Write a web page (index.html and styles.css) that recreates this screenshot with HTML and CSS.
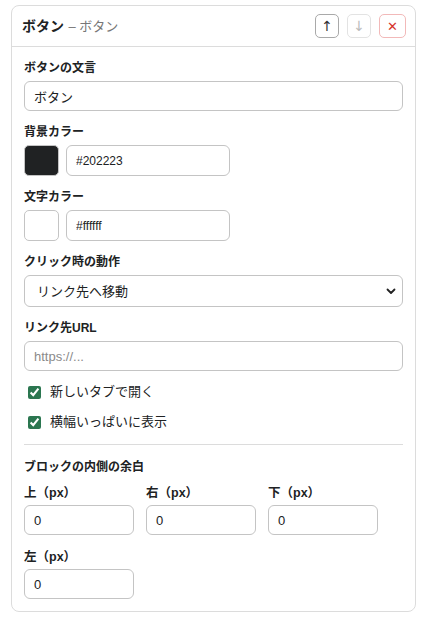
FILE: index.html
```html
<!DOCTYPE html>
<html lang="ja">
<head>
  <meta charset="UTF-8" />
  <meta name="viewport" content="width=device-width, initial-scale=1.0"/>
  <title>ボタン</title>
  <link rel="stylesheet" href="styles.css">
</head>
<body>
  <div class="block-card">
    <div class="block-head">
      <div class="block-title"><strong>ボタン</strong> <span class="block-sub">– ボタン</span></div>
      <div class="head-actions">
        <button class="icon-btn" title="上へ">↑</button>
        <button class="icon-btn disabled" title="下へ">↓</button>
        <button class="icon-btn danger" title="削除">✕</button>
      </div>
    </div>

    <div class="block-body">
      <div class="field">
        <label>ボタンの文言</label>
        <input type="text" class="text-input" value="ボタン">
      </div>

      <div class="field">
        <label>背景カラー</label>
        <div class="color-row">
          <span class="swatch" style="background: #202223;"></span>
          <input type="text" class="text-input hex" value="#202223">
        </div>
      </div>

      <div class="field">
        <label>文字カラー</label>
        <div class="color-row">
          <span class="swatch" style="background: #ffffff;"></span>
          <input type="text" class="text-input hex" value="#ffffff">
        </div>
      </div>

      <div class="field">
        <label>クリック時の動作</label>
        <div class="select-wrap">
          <select class="select-input">
            <option>リンク先へ移動</option>
          </select>
          <svg class="chevron" width="10" height="7" viewBox="0 0 10 7">
            <path d="M1.5 1.5 L5 5 L8.5 1.5" fill="none" stroke="#222" stroke-width="1.8" stroke-linecap="round" stroke-linejoin="round"/>
          </svg>
        </div>
      </div>

      <div class="field">
        <label>リンク先URL</label>
        <input type="text" class="text-input" placeholder="https://...">
      </div>

      <div class="checks">
        <label class="check"><input type="checkbox" checked> 新しいタブで開く</label>
        <label class="check"><input type="checkbox" checked> 横幅いっぱいに表示</label>
      </div>

      <hr class="divider">

      <div class="field">
        <label>ブロックの内側の余白</label>
        <div class="pad-grid">
          <div class="pad-item">
            <label>上（px）</label>
            <input type="text" class="text-input" value="0">
          </div>
          <div class="pad-item">
            <label>右（px）</label>
            <input type="text" class="text-input" value="0">
          </div>
          <div class="pad-item">
            <label>下（px）</label>
            <input type="text" class="text-input" value="0">
          </div>
          <div class="pad-item">
            <label>左（px）</label>
            <input type="text" class="text-input" value="0">
          </div>
        </div>
      </div>
    </div>
  </div>
</body>
</html>
```

FILE: styles.css
```css
* {
  box-sizing: border-box;
  margin: 0;
  padding: 0;
}

body {
  font-family: "Liberation Sans", "Noto Sans CJK JP", sans-serif;
  background: #fff;
  color: #202223;
  padding: 5px 11px;
}

.block-card {
  border: 1px solid #dcdcdc;
  border-radius: 8px;
  background: #fff;
}

.block-head {
  display: flex;
  align-items: center;
  justify-content: space-between;
  height: 41px;
  padding: 0 9px 0 10px;
  border-bottom: 1px solid #dcdcdc;
}

.block-title {
  margin-top: -3px;
}

.block-title strong {
  font-size: 14px;
  font-weight: bold;
}

.block-sub {
  font-size: 13px;
  color: #777;
}

.head-actions {
  display: flex;
  gap: 8px;
}

.icon-btn {
  width: 24px;
  height: 24px;
  border: 1px solid #a9a9a9;
  border-radius: 5px;
  background: #fff;
  color: #333;
  font-size: 14px;
  font-family: "DejaVu Sans", sans-serif;
  line-height: 1;
}

.icon-btn.disabled {
  border-color: #e3e3e3;
  color: #bbb;
}

.icon-btn.danger {
  width: 27px;
  border-color: #f2b9b9;
  color: #d6342c;
  font-size: 13px;
}

.block-body {
  padding: 12px;
}

.field {
  margin-bottom: 12px;
}

.field label {
  display: block;
  font-size: 12px;
  font-weight: bold;
  line-height: 18px;
  margin-bottom: 4px;
}

.text-input {
  width: 100%;
  height: 30px;
  padding: 0 9px;
  border: 1px solid #c4c4c4;
  border-radius: 6px;
  font-family: inherit;
  font-size: 13px;
  color: #202223;
  background: #fff;
}

.text-input::placeholder {
  color: #8a8a8a;
}

.color-row {
  display: flex;
  gap: 7px;
}

.swatch {
  width: 35px;
  height: 31px;
  border: 1px solid #c4c4c4;
  border-radius: 5px;
}

.text-input.hex {
  width: 164px;
  height: 31px;
  font-size: 12px;
}

.select-wrap {
  position: relative;
}

.select-input {
  width: 100%;
  height: 32px;
  padding: 0 12px;
  border: 1px solid #c4c4c4;
  border-radius: 6px;
  appearance: none;
  background: #fff;
  font-family: inherit;
  font-size: 13px;
  color: #202223;
}

.chevron {
  position: absolute;
  right: 7px;
  top: 13px;
}

.checks {
  display: flex;
  flex-direction: column;
  gap: 10px;
  margin-top: -1px;
}

.check {
  display: flex;
  align-items: center;
  gap: 9px;
  height: 20px;
  line-height: 20px;
  margin-left: 4px;
  font-size: 13px;
}

.check input {
  width: 13px;
  height: 13px;
  accent-color: #2b7650;
}

.divider {
  border: none;
  border-top: 1px solid #dcdcdc;
  margin: 12px 0 13px;
}

.pad-grid {
  display: grid;
  grid-template-columns: repeat(3, 110px);
  column-gap: 12px;
  row-gap: 13px;
  margin-top: 8px;
}

.pad-item label {
  font-size: 12.5px;
  margin-bottom: 3px;
}

.field:last-child {
  margin-bottom: 0;
}
```
